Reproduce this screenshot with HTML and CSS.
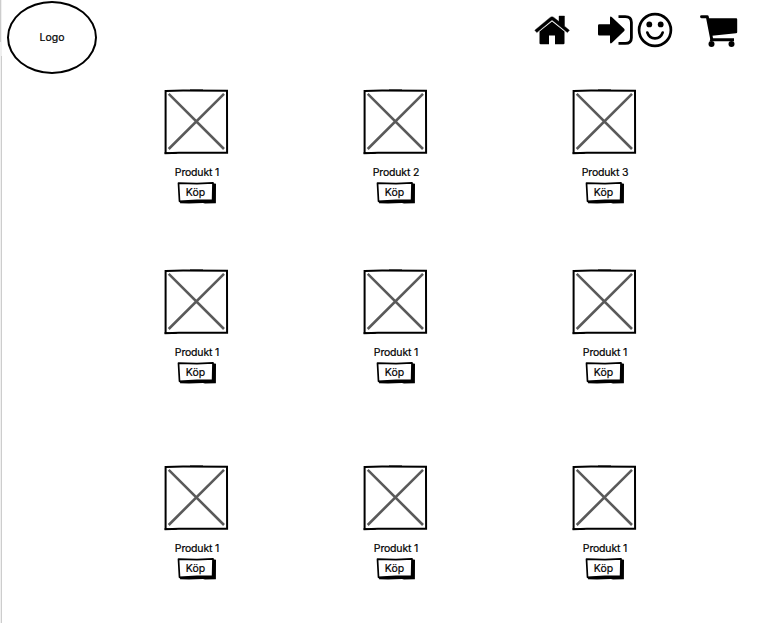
FILE: index.html
```
<!DOCTYPE html>
<html lang="sv">
<head>
<meta charset="utf-8">
<title>Produkter</title>
<link rel="stylesheet" href="styles.css">
</head>
<body>
<svg width="0" height="0" class="defs">
  <symbol id="picture" viewBox="0 0 66 66">
    <path d="M5.7 4.8 61 60M61 4.8 5.7 60" fill="none" stroke="#5a5a5a" stroke-width="2.6"/>
    <path d="M2.6 1.9 20 1.6 64 1.7 64.1 63.7 16 63.8 2.6 64.2Z" fill="none" stroke="#000" stroke-width="2"/>
    <path d="M1.6 65.1V63L14 64.4V65.1ZM27 .6H40V2H27Z"/>
  </symbol>
  <symbol id="button" viewBox="0 0 40 24">
    <path d="M36 2.3 39 2.8 38.9 22.2 28 22.4 26 21.9 12 22.6 3 22.2 3.2 19.6 36 19.6Z"/>
    <path d="M1.5 2.1 20 2.6 36 1.9 35.6 19.4 20 19.3 2.5 20.3Z" fill="#fff" stroke="#000" stroke-width="1.7" stroke-linejoin="round"/>
  </symbol>
</svg>
<div class="page">
  <header class="header">
    <div class="logo">Logo</div>
    <nav class="nav">
      <svg class="home" viewBox="0 0 36 30"><path d="M18 6.5 30.5 16.5V28.2Q30.5 29.3 29.3 29.3H21V20.4H15V29.3H6.7Q5.5 29.3 5.5 28.2V16.5Z"/><path d="M.8 15.2 16.2 2.4Q18 1 19.8 2.4L25 6.6V1H30.5V11.2L35.4 15.2 33.4 17.6 18 4.9 2.8 17.6Z" stroke="#000" stroke-width=".4"/></svg>
      <svg class="login" viewBox="0 0 36 32"><path d="M0 11.5Q0 10.2 1.3 10.2H12V4Q12 1.5 14 3.2L26.2 14.8Q27.2 16 26.2 17.1L14 28.8Q12 30.5 12 28V21.6H1.3Q0 21.6 0 20.3Z"/><path d="M20.5 2.6H27.2Q33.4 2.6 33.4 8.3V23.7Q33.4 29.4 27.2 29.4H20.5" fill="none" stroke="#000" stroke-width="2.8"/></svg>
      <svg class="smile" viewBox="0 0 36 36"><circle cx="18" cy="18" r="15.9" fill="none" stroke="#000" stroke-width="2.7"/><circle cx="12.3" cy="12.4" r="2.9"/><circle cx="23.7" cy="12.4" r="2.9"/><path d="M10.3 20.5Q12.3 26.4 18 26.4T25.7 20.5" fill="none" stroke="#000" stroke-width="2.6" stroke-linecap="round"/></svg>
      <svg class="cart" viewBox="0 0 38 34"><path d="M1.5 2.7H7.3L11.8 25.6" fill="none" stroke="#000" stroke-width="2.9" stroke-linecap="round" stroke-linejoin="round"/><path d="M8 4.3H36.2Q37.2 4.3 37.2 5.4V18.2Q37.2 19.2 36 19.3L12 21.8V24.2H34V27.2H9.5L11 24.2Z"/><circle cx="11.5" cy="30" r="3"/><circle cx="31.5" cy="30" r="3"/></svg>
    </nav>
  </header>
  <main class="products">
    <article class="product"><svg class="picture"><use href="#picture"/></svg><h2 class="name">Produkt 1</h2><button class="buy"><svg class="frame"><use href="#button"/></svg><span>Köp</span></button></article>
    <article class="product"><svg class="picture"><use href="#picture"/></svg><h2 class="name">Produkt 2</h2><button class="buy"><svg class="frame"><use href="#button"/></svg><span>Köp</span></button></article>
    <article class="product"><svg class="picture"><use href="#picture"/></svg><h2 class="name">Produkt 3</h2><button class="buy"><svg class="frame"><use href="#button"/></svg><span>Köp</span></button></article>
    <article class="product"><svg class="picture"><use href="#picture"/></svg><h2 class="name">Produkt 1</h2><button class="buy"><svg class="frame"><use href="#button"/></svg><span>Köp</span></button></article>
    <article class="product"><svg class="picture"><use href="#picture"/></svg><h2 class="name">Produkt 1</h2><button class="buy"><svg class="frame"><use href="#button"/></svg><span>Köp</span></button></article>
    <article class="product"><svg class="picture"><use href="#picture"/></svg><h2 class="name">Produkt 1</h2><button class="buy"><svg class="frame"><use href="#button"/></svg><span>Köp</span></button></article>
    <article class="product"><svg class="picture"><use href="#picture"/></svg><h2 class="name">Produkt 1</h2><button class="buy"><svg class="frame"><use href="#button"/></svg><span>Köp</span></button></article>
    <article class="product"><svg class="picture"><use href="#picture"/></svg><h2 class="name">Produkt 1</h2><button class="buy"><svg class="frame"><use href="#button"/></svg><span>Köp</span></button></article>
    <article class="product"><svg class="picture"><use href="#picture"/></svg><h2 class="name">Produkt 1</h2><button class="buy"><svg class="frame"><use href="#button"/></svg><span>Köp</span></button></article>
  </main>
</div>
</body>
</html>
```
FILE: styles.css
```
* { box-sizing: border-box; }

body {
  margin: 0;
  background: #fff;
  color: #000;
  font: 10.5px/14px Inter, "Liberation Sans", sans-serif;
  -webkit-text-stroke: .2px #000;
}

.defs { position: absolute; }

.page {
  height: 623px;
  overflow: hidden;
  background:
    linear-gradient(#cdcdcd 0 42px, #f0f0f0 42px 56px, #f0f0f0 56px) 0 0 / 1px 100% no-repeat,
    linear-gradient(#f0f0f0 0 56px, #cdcdcd 56px) 1px 0 / 1px 100% no-repeat;
}

.header {
  display: flex;
  justify-content: space-between;
  height: 89px;
  padding: 1px 35px 0 7px;
}

.logo {
  display: flex;
  align-items: center;
  justify-content: center;
  width: 90px;
  height: 73px;
  border: 2px solid #000;
  border-radius: 50%;
}

.nav { display: flex; align-items: flex-start; }
.nav svg { display: block; }
.home { width: 36px; height: 30px; margin: 14px 28px 0 0; }
.login { width: 36px; height: 32px; margin: 13px 3px 0 0; }
.smile { width: 36px; height: 36px; margin: 11px 27px 0 0; }
.cart { width: 38px; height: 34px; margin-top: 13px; }

.products {
  display: grid;
  grid-template-columns: 199px 209px 66px;
  grid-template-rows: 180px 196px 120px;
  padding-left: 163px;
}

.product {
  display: flex;
  flex-direction: column;
  align-items: center;
  width: 66px;
}

.picture { display: block; width: 66px; height: 66px; }

.name {
  margin: 11px 0 1px;
  padding-left: 2px;
  font-size: inherit;
  font-weight: 400;
  letter-spacing: -.17px;
  white-space: nowrap;
}

.buy {
  display: grid;
  width: 40px;
  height: 24px;
  margin-left: 1px;
  padding: 0;
  border: 0;
  background: none;
  color: inherit;
  font: inherit;
}

.frame, .buy span { grid-area: 1 / 1; }
.frame { width: 40px; height: 24px; }
.buy span { padding: 5px 2px 0 0; }
```
